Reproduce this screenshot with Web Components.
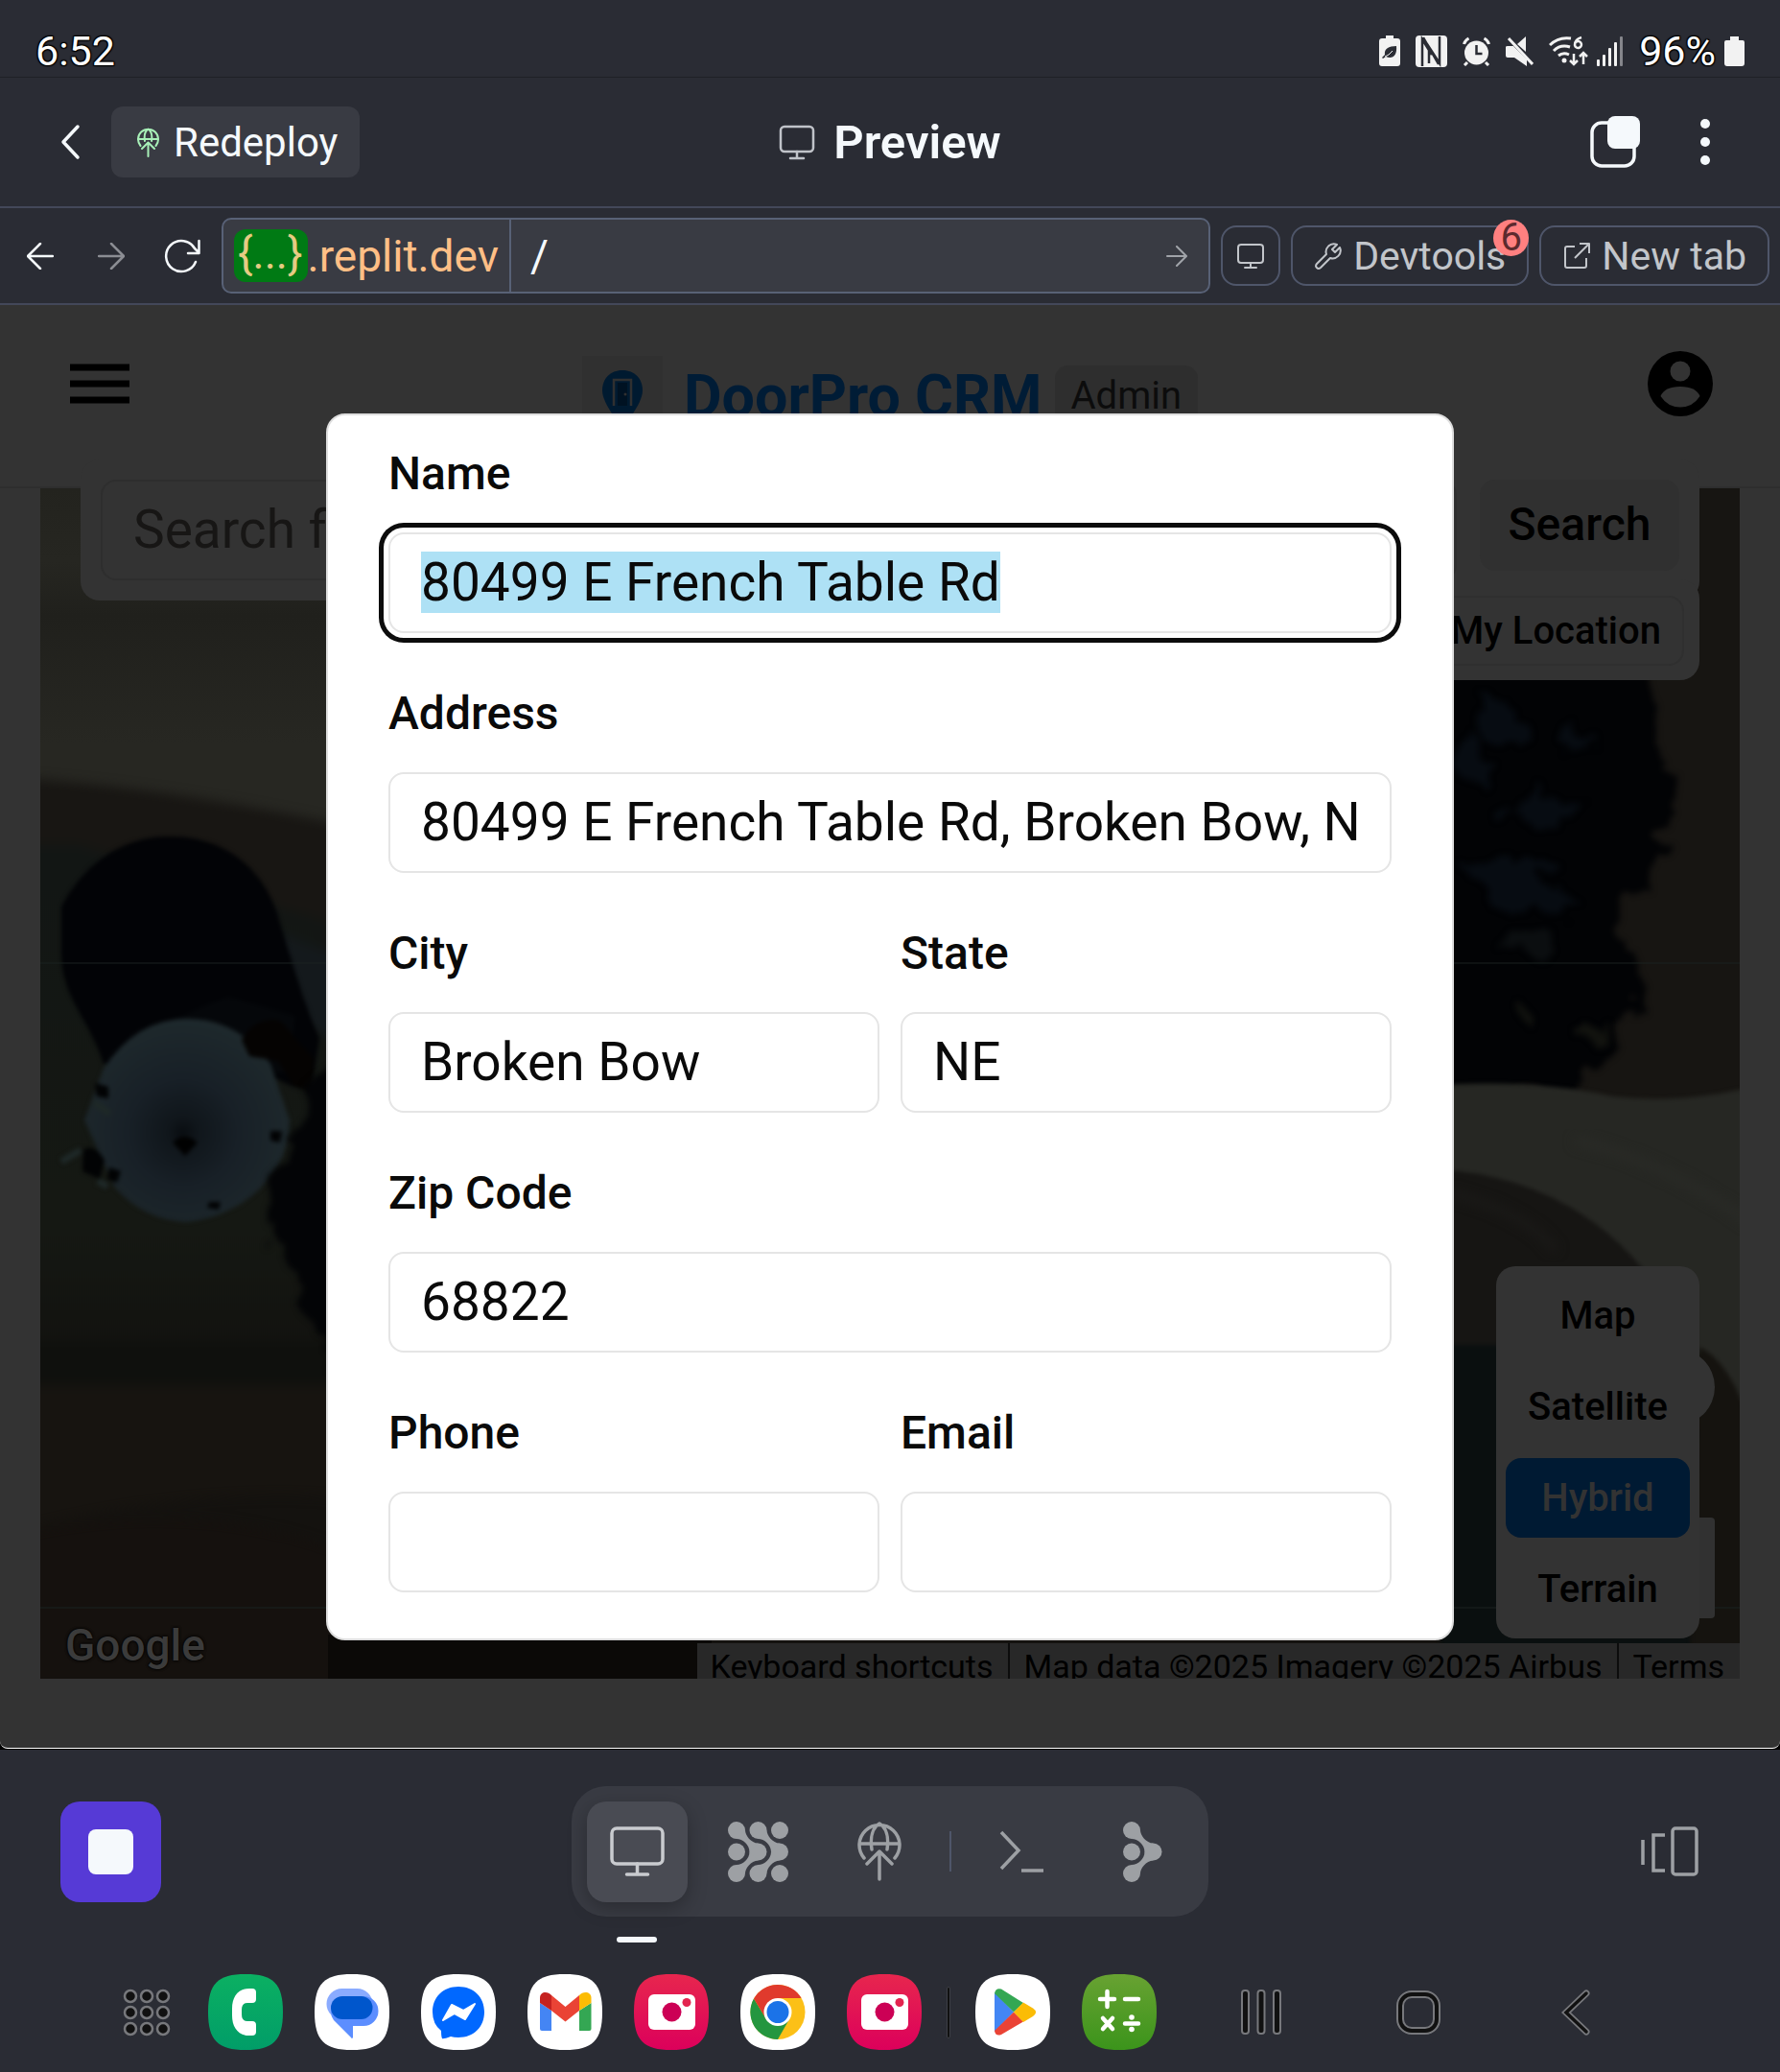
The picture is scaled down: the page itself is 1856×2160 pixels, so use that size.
<!DOCTYPE html>
<html lang="en">
<head>
<meta charset="utf-8">
<title>Preview</title>
<style>
  html, body { margin: 0; }
  body {
    min-height: 100vh; display: flex; flex-direction: column;
    background: #2a2c34; color: #f5f9fc;
    font-family: Roboto, "Liberation Sans", sans-serif;
  }
  crm-preview { flex: 1; }
</style>
</head>
<body>
<status-bar time="6:52" battery="96%"></status-bar>
<app-header><span slot="action">Redeploy</span><span slot="title">Preview</span></app-header>
<browser-bar></browser-bar>
<crm-preview></crm-preview>
<tool-dock></tool-dock>
<task-bar></task-bar>

<script>
const squircle = fill => `<path fill="${fill}" d="M39 0C68 0 78 10 78 39.500S68 79 39 79 0 69 0 39.500 10 0 39 0Z"/>`;
const link = (x, y) => `<path d="M${x + 18} ${y + 9}c0 5 6 13.500 13.500 13.500l-9 9c0-7.500-7-13.500-13.500-13.500z"/>`;
const linkUp = (x, y) => `<path d="M${x + 18} ${y + 54}c0-5 6-13.500 13.500-13.500l-9-9c0 7.500-7 13.500-13.500 13.500z"/>`;
const dot = (x, y) => `<circle cx="${x}" cy="${y}" r="9"/>`;
const camera = squircle('url(#g)') + `<defs><linearGradient id="g" x1="0" y1="0" x2="0" y2="1"><stop stop-color="#e7264e"/><stop offset="1" stop-color="#dc005b"/></linearGradient></defs><rect x="15" y="21" width="49" height="37" rx="6" fill="#fff"/><circle cx="39.500" cy="39.500" r="10" fill="#cc0055"/><circle cx="55" cy="29.500" r="4.500" fill="#e3244f"/>`;

/* name: [width, height, markup] */
const ICONS = {
  batteryLeaf: [22, 32, `<path fill="#f2f2f2" d="M7 0h8v3h4q3 0 3 3v23q0 3-3 3H3q-3 0-3-3V6q0-3 3-3h4z"/><path fill="#2a2c34" d="M18 11c-8 0-13 3-12 9l-3 3 1 1 3-2c7 3 12-1 11-11z"/><path d="M6 22q4-1 8-6" stroke="#f2f2f2" fill="none"/>`],
  nfc: [33, 33, `<rect width="33" height="33" rx="4" fill="#f2f2f2"/><path d="M7 32V4L17 20M25 1v28L14 12v17M8 2l16 28" fill="none" stroke="#2a2c34" stroke-width="2.500"/>`],
  alarm: [29, 31, `<circle cx="14.500" cy="17" r="12.500" fill="#f2f2f2"/><path d="M1.500 8q1-4 5-6M27.500 8q-1-4-5-6M5 27l-3 3M24 27l3 3" stroke="#f2f2f2" stroke-width="3" fill="none"/><path d="M14.500 9v9h6" fill="none" stroke="#2a2c34" stroke-width="2.500"/>`],
  mute: [29, 31, `<path fill="#f2f2f2" d="M0 11q0-1 2-1h6l14 14v7L9 22H2q-2 0-2-2zM21 0v16L12 8z"/><path d="M3 2l25 27" stroke="#f2f2f2" stroke-width="3"/>`],
  wifi: [41, 32, `<g fill="none" stroke="#f2f2f2" stroke-width="3"><path d="M1 10q9-9 22-7"/><path d="M5 16q7-7 17-4"/><path d="M10 21q5-4 11-1"/></g><circle cx="16" cy="26" r="2.500" fill="#f2f2f2"/><path d="M34 2q-7 2-7 8a3.500 3.500 0 1 0 1-3" fill="none" stroke="#f2f2f2" stroke-width="2.500"/><path d="M26 19v11m-4-4 4 4 4-4M36 30V18m-4 4 4-4 4 4" fill="none" stroke="#f2f2f2" stroke-width="2.500"/>`],
  signal: [28, 31, `<g fill="#f2f2f2"><rect y="24" width="3" height="7" rx="1"/><rect x="6" y="19" width="3" height="12" rx="1"/><rect x="12" y="12" width="3" height="19" rx="1"/><rect x="18" y="6" width="3" height="25" rx="1"/></g><rect x="24" width="3" height="31" rx="1" fill="#85868b"/>`],
  battery: [21, 31, `<path fill="#f2f2f2" d="M6 0h9v4h4q2 0 2 2v22q0 3-3 3H3q-3 0-3-3V6q0-2 2-2h4z"/>`],
  chevron: [22, 38, `<path d="M19 3 4 19l15 16" fill="none" stroke="#f5f9fc" stroke-width="3.500" stroke-linecap="round" stroke-linejoin="round"/>`],
  globe: [46, 62, `<g fill="none" stroke="currentColor" stroke-width="3.500" stroke-linecap="round" stroke-linejoin="round"><path d="M7 38A21 21 0 1 1 39 38M2 23h42M15 29C13 16 16 6 23 2c7 4 10 14 8 27M23 60V31M10 44l13-13 13 13"/></g>`],
  globeBold: [23, 31, `<g fill="none" stroke="currentColor" stroke-width="2" stroke-linecap="round" stroke-linejoin="round"><path d="M3.500 19A10.500 10.500 0 1 1 19.500 19M1.500 12h20M8 14C7 8 8 4 11.500 1.500 15 4 16 8 15 14M11.500 30V16M5 22l6.500-6.500L18 22"/></g>`],
  monitor: [38, 37, `<g fill="none" stroke="currentColor" stroke-width="2.500" stroke-linecap="round"><rect x="2" y="2" width="34" height="26" rx="4"/><path d="M19 28v7M12 35h14"/></g>`],
  monitorSmall: [30, 28, `<g fill="none" stroke="currentColor" stroke-width="2" stroke-linecap="round"><rect x="2" y="2" width="26" height="19" rx="3"/><path d="M15 21v5M9 26h12"/></g>`],
  monitorLarge: [57, 52, `<g fill="none" stroke="currentColor" stroke-width="3.500" stroke-linecap="round"><rect x="2" y="2" width="53" height="37" rx="5"/><path d="M28.500 39v10M17.500 50h22"/></g>`],
  windows: [52, 54, `<rect x="2" y="7" width="44" height="45" rx="10" fill="none" stroke="#f5f9fc" stroke-width="3.500"/><rect x="18" y="0" width="34" height="34" rx="8" fill="#f5f9fc"/>`],
  dots: [12, 50, `<g fill="#f5f9fc"><circle cx="6" cy="6" r="5"/><circle cx="6" cy="25" r="5"/><circle cx="6" cy="44" r="5"/></g>`],
  left: [28, 28, `<path d="M27 14H1M14 1 1 14l13 13" fill="none" stroke="currentColor" stroke-width="2.500" stroke-linecap="round" stroke-linejoin="round"/>`],
  right: [28, 28, `<path d="M1 14h26M14 1l13 13-13 13" fill="none" stroke="currentColor" stroke-width="2.500" stroke-linecap="round" stroke-linejoin="round"/>`],
  go: [22, 22, `<path d="M1 11h19M11 1l10 10-10 10" fill="none" stroke="currentColor" stroke-width="2" stroke-linecap="round"/>`],
  reload: [38, 36, `<path d="M36.500 2v13H25M33 24a16 16 0 1 1-1-14l4.500 4.500" fill="none" stroke="currentColor" stroke-width="2.500" stroke-linecap="round" stroke-linejoin="round"/>`],
  wrench: [28, 28, `<path d="M23 2C16-1 10 6 12 12L2 22c-2.500 3 1 6.500 4 4l10-10c6 2 13-4 10-11l-5 5-3-3z" fill="none" stroke="currentColor" stroke-width="2" stroke-linejoin="round"/>`],
  external: [28, 28, `<path d="M12 4H4Q2 4 2 6v18q0 2 2 2h18q2 0 2-2v-8M17 1h10v10M27 1 12 16" fill="none" stroke="currentColor" stroke-width="2" stroke-linejoin="round"/>`],
  menu: [62, 42, `<path d="M0 4h62M0 21h62M0 38h62" stroke="#000" stroke-width="7"/>`],
  account: [68, 68, `<circle cx="34" cy="34" r="34"/><circle cx="34" cy="21" r="10.500" fill="#333"/><path d="M13.500 47q4-10 20.500-10t20.500 10Q47 58.500 34 58.500T13.500 47z" fill="#333"/>`],
  pin: [84, 84, `<rect width="84" height="84" fill="#303030"/><path d="M42 15c-13 0-21 9-21 21 0 15 21 38 21 38s21-23 21-38c0-12-8-21-21-21z" fill="#001a30"/><path d="M33 52V25h18v27" fill="none" stroke="#303030" stroke-width="2.500"/><path d="M37 28h10v24H37z" fill="#001222"/><circle cx="45" cy="40" r="1.500" fill="#303030"/>`],
  stop: [47, 47, `<rect width="47" height="47" rx="8" fill="#f5f9fc"/>`],
  agent: [63, 63, `<g fill="currentColor">${[9, 31.5, 54].map(x => [9, 31.5, 54].map(y => dot(x, y)).join('')).join('')}${link(0, 0)}${linkUp(0, 0)}${link(22.5, 0)}${linkUp(22.5, 0)}</g>`],
  branch: [41, 63, `<g fill="currentColor">${dot(9, 9)}${dot(9, 31.5)}${dot(9, 54)}${dot(31.5, 31.5)}${link(0, 0)}${linkUp(0, 0)}</g>`],
  shell: [48, 44, `<path d="M2 2l18 19L2 40M23 42h23" fill="none" stroke="currentColor" stroke-width="3.500"/>`],
  panels: [60, 52, `<g fill="none" stroke="currentColor" stroke-width="3.500"><path d="M2 14v26M25 9H13v37h12"/><rect x="33" y="2" width="25" height="48" rx="3"/></g>`],
  apps: [50, 50, `<g fill="#111" stroke="#77787c" stroke-width="2.500">${[8, 25, 42].map(x => [8, 25, 42].map(y => `<circle cx="${x}" cy="${y}" r="6"/>`).join('')).join('')}</g>`],
  phone: [78, 79, `<defs><linearGradient id="g" x1="0" y1="0" x2="0" y2="1"><stop stop-color="#0bb062"/><stop offset="1" stop-color="#019d68"/></linearGradient></defs>${squircle('url(#g)')}<path fill="#fff" d="M46 15q4 0 4 4v7q0 4-4 4h-5q-6 0-6 7v5q0 7 6 7h5q4 0 4 4v7q0 4-4 4h-3c-12 0-18-9-18-21v-7c0-12 6-21 18-21z"/>`],
  messages: [78, 79, `${squircle('#fff')}<rect x="12.500" y="15" width="48" height="32" rx="16" fill="#8aabff"/><path fill="#5c8eff" d="M31 23h20a15.500 15.500 0 0 1 0 31H40v12q-1 2-2 0L20 48q-3-4-3-9 1-14 14-16z"/><rect x="17" y="23" width="43.500" height="24" rx="12" fill="#0056cc"/>`],
  messenger: [78, 79, `${squircle('#fff')}<path fill="#0068ff" d="M39 13c16 0 27 11 27 26.500S55 66 39 66q-5 0-8-1-8 3-9 2-1-2-1-8-9-7-9-19.500C12 24 23 13 39 13z"/><path fill="#fff" stroke="#fff" stroke-width="2" stroke-linejoin="round" d="M23 48l9-16 12 6 12-7-10 16-11-6z"/>`],
  gmail: [78, 79, `${squircle('#fff')}<path fill="#4485f4" d="M13 30l12 8v21H15q-2 0-2-2z"/><path fill="#34a753" d="M66.500 30 54 38v21h10.500q2 0 2-2z"/><path fill="#ea4335" d="M25 22l14.500 12L54 22v16L39.500 49.500 25 38z"/><path fill="#c52220" d="M13 30v-5c0-7 8-7.500 12-3v16z"/><path fill="#fcbc04" d="M66.500 30v-5c0-7-8.500-7.500-12.500-3v16z"/>`],
  camera: [78, 79, camera],
  chrome: [78, 79, `${squircle('#fff')}<circle cx="39" cy="39.500" r="28.500" fill="#fcc017"/><path fill="#24963f" d="M14 25.500 27 47l24 0-12 21A28.500 28.500 0 0 1 14 25.500z"/><path fill="#e03a2d" d="M14 25.500a28.500 28.500 0 0 1 49.500-.500H39L27 47z"/><circle cx="39" cy="39.500" r="14.500" fill="#fff"/><circle cx="39" cy="39.500" r="11.500" fill="#1b73e8"/>`],
  play: [78, 79, `${squircle('#fff')}<path fill="#4386f4" d="M20 19l20 20.500L20 60z"/><path fill="#34a753" d="M20 20q1-6 7-4.500L50 30 40 39.500z"/><path fill="#ea4335" d="M20 59q1 6 7 4l23-13.500-10-10z"/><path fill="#fbbc05" d="M50 29.500l10 6q6 4 0 8.500l-10 6-10-10.500z"/>`],
  calc: [78, 79, `<defs><linearGradient id="g" x1="0" y1="0" x2="0" y2="1"><stop stop-color="#68a232"/><stop offset="1" stop-color="#3b941b"/></linearGradient></defs>${squircle('url(#g)')}<g stroke="#fff" stroke-width="4.500" stroke-linecap="round"><path d="M19 26h15M26.500 18v16M45 26h14M45 51.500h14M22 46l10 11M32 46 22 57"/></g><circle cx="52" cy="45" r="2.800" fill="#fff"/><circle cx="52" cy="57.500" r="2.800" fill="#fff"/>`],
  recents: [44, 47, `<g fill="#111" stroke="#77787c" stroke-width="2"><rect x="2" y="1" width="7" height="45" rx="3"/><rect x="18.500" y="1" width="7" height="45" rx="3"/><rect x="35" y="1" width="7" height="45" rx="3"/></g>`],
  home: [46, 46, `<g fill="none"><rect x="4" y="4" width="38" height="38" rx="12" stroke="#77787c" stroke-width="8"/><rect x="4" y="4" width="38" height="38" rx="12" stroke="#111" stroke-width="4"/></g>`],
  back: [30, 48, `<g fill="none" stroke-linecap="round"><path d="M26 4 5 24l21 20" stroke="#77787c" stroke-width="7"/><path d="M26 4 5 24l21 20" stroke="#111" stroke-width="3.500"/></g>`]
};

function component(name, html, setup) {
  const template = document.createElement('template');
  template.innerHTML = html;
  customElements.define(name, class extends HTMLElement {
    constructor() {
      super();
      this.attachShadow({ mode: 'open' }).append(template.content.cloneNode(true));
    }
    connectedCallback() { if (setup) setup.call(this, this.shadowRoot); }
  });
}

component('ui-icon', `<style>:host{display:block;flex:none} svg{display:block}</style>`, function (root) {
  const [w, h, body] = ICONS[this.getAttribute('name')];
  root.innerHTML += `<svg width="${w}" height="${h}" viewBox="0 0 ${w} ${h}" aria-hidden="true">${body}</svg>`;
});

const RESET = `*{box-sizing:border-box} button,input{font:inherit;color:inherit;margin:0;padding:0;border:0;background:none}`;

component('status-bar', `
<style>${RESET}
:host{display:flex;height:81px;align-items:center;justify-content:space-between;padding:26px 37px 0;border-bottom:1px solid #1f2126;box-sizing:border-box;font-size:43px;line-height:50px;color:#fff;
 text-shadow:0 0 2px #000,1px 1px 1px #000,-1px -1px 1px #000,1px -1px 1px #000,-1px 1px 1px #000}
div{display:flex;align-items:center;gap:16px}
.tight{gap:9px}
</style>
<span id="time"></span>
<div><ui-icon name="batteryLeaf"></ui-icon><ui-icon name="nfc"></ui-icon><ui-icon name="alarm"></ui-icon><ui-icon name="mute"></ui-icon>
<div class="tight"><ui-icon name="wifi"></ui-icon><ui-icon name="signal"></ui-icon></div>
<div class="tight"><span id="battery"></span><ui-icon name="battery"></ui-icon></div></div>`,
function (root) {
  root.getElementById('time').textContent = this.getAttribute('time');
  root.getElementById('battery').textContent = this.getAttribute('battery');
});

component('app-header', `
<style>${RESET}
:host{display:grid;grid-template-columns:1fr auto 1fr;align-items:center;height:136px;box-sizing:border-box;border-bottom:2px solid #434859;padding:0 52px}
.side{display:flex;align-items:center;gap:22px}
.end{justify-content:flex-end;gap:62px;padding-right:20px}
.back{padding:0 10px}
.deploy{display:flex;align-items:center;gap:15px;height:74px;padding:0 23px 0 27px;border-radius:12px;background:#393b43;font-size:42px}
.deploy ui-icon{color:#a8f0b8}
h1{display:flex;align-items:center;gap:19px;margin:0;font-size:49px;font-weight:600}
h1 ui-icon{color:#c0c3c9}
</style>
<div class="side"><button class="back" aria-label="Back"><ui-icon name="chevron"></ui-icon></button>
<button class="deploy"><ui-icon name="globeBold"></ui-icon><slot name="action"></slot></button></div>
<h1><ui-icon name="monitor"></ui-icon><slot name="title"></slot></h1>
<div class="side end"><button aria-label="Tabs"><ui-icon name="windows"></ui-icon></button><button aria-label="More"><ui-icon name="dots"></ui-icon></button></div>`);

component('browser-bar', `
<style>${RESET}
:host{display:flex;align-items:center;gap:11px;height:101px;box-sizing:border-box;border-bottom:2px solid #434859;padding:0 11px 0 5px}
nav{display:flex;margin-right:-7px}
nav button{width:74px;height:74px;display:grid;place-items:center}
nav button:disabled{color:#8b8d93}
.url{flex:1;min-width:0;display:flex;align-items:stretch;height:79px;border:2px solid #586176;border-radius:10px;background:#393b43;font-size:46px}
.host{display:flex;align-items:center;padding:0 11px;border-right:2px solid #586176;color:#ffbf86}
.host b{font-weight:400;height:55px;line-height:50px;padding:0 5px 0 4px;border-radius:12px;background:#007a14;color:#e6cb83}
.url input{flex:1;min-width:0;padding-left:20px;outline:0}
.url button{width:66px;display:grid;place-items:center;color:#a0a3a9}
.btn{position:relative;display:flex;align-items:center;gap:12px;height:63px;border:2px solid #4f566a;border-radius:16px;padding:0 22px 0 23px;font-size:41px;color:#c2c5ca;white-space:nowrap}
.btn.icon{padding:0 14px}
.badge{position:absolute;right:-2px;top:-8px;width:37px;height:38px;border-radius:50%;background:#ff8080;color:#5c2a2e;font-size:40px;line-height:38px;text-align:center}
</style>
<nav><button aria-label="Back"><ui-icon name="left"></ui-icon></button><button aria-label="Forward" disabled><ui-icon name="right"></ui-icon></button><button aria-label="Reload"><ui-icon name="reload"></ui-icon></button></nav>
<div class="url"><span class="host"><b>{...}</b><span>.replit.dev</span></span><input aria-label="Path" value="/"><button aria-label="Go"><ui-icon name="go"></ui-icon></button></div>
<button class="btn icon" aria-label="Device size"><ui-icon name="monitorSmall"></ui-icon></button>
<button class="btn"><ui-icon name="wrench"></ui-icon>Devtools<span class="badge">6</span></button>
<button class="btn"><ui-icon name="external"></ui-icon>New tab</button>`);

component('satellite-photo', `
<style>:host{display:block;overflow:hidden} svg{display:block;width:100%;height:100%}</style>
<svg viewBox="0 0 1772 1241" preserveAspectRatio="none" color-interpolation-filters="sRGB" aria-hidden="true">
<defs>
<filter id="soft"><feGaussianBlur stdDeviation="6"/></filter>
<filter id="edge"><feGaussianBlur stdDeviation="2"/></filter>
<filter id="rough" x="-10%" y="-10%" width="120%" height="120%"><feTurbulence type="fractalNoise" baseFrequency=".03" numOctaves="3" seed="4"/><feDisplacementMap in="SourceGraphic" scale="50" xChannelSelector="R" yChannelSelector="G"/><feGaussianBlur stdDeviation="3"/></filter>
<linearGradient id="left" x1="0" y1="0" x2="0" y2="1"><stop stop-color="#23231e"/><stop offset=".2" stop-color="#262621"/><stop offset=".35" stop-color="#20201c"/><stop offset=".7" stop-color="#272722"/></linearGradient>
<radialGradient id="cone" cx=".48" cy=".56" r=".6"><stop stop-color="#090d11"/><stop offset=".12" stop-color="#10161b"/><stop offset=".45" stop-color="#182027"/><stop offset="1" stop-color="#1f2a2d"/></radialGradient>
<linearGradient id="ground" x1="0" y1="0" x2="0" y2="1"><stop stop-color="#121614"/><stop offset=".75" stop-color="#151813"/><stop offset="1" stop-color="#12120f"/></linearGradient>
</defs>
<rect width="1772" height="1241" fill="#14120f"/>
<rect width="760" height="380" fill="url(#left)"/>
<g filter="url(#soft)">
<path d="M-20 302q150 10 330 48v170H-20z" fill="#181613"/>
<path d="M-20 372l60 0 260 80v450H-20z" fill="url(#ground)"/>
<path d="M-20 890h340v45H-20z" fill="#0f100d"/>
<path d="M-20 935h360v120q-160-20-360 30z" fill="#171410"/>
<path d="M-20 1090q180-40 340 20v140H-20z" fill="#15110e"/>
<path d="M240 460q50 20 80 30v90l-50-20z" fill="#14191c"/>
</g>
<g filter="url(#edge)">
<path d="M22 436C50 385 90 363 135 363c55 0 95 30 112 80 15 50 30 100 44 130l-8 55q-50-5-90-70L66 600C50 550 20 530 22 480z" fill="#020306"/>
<path d="M66 600q60-45 130-70l70 20-6 60z" fill="#05070a"/>
<path d="M46 659L66 605Q100 553 153 553T240 600l20 59q0 40-30 70t-77 36q-45-2-75-36z" fill="url(#cone)"/>
<path d="M210 575q15-25 40-20l35 40-2 35-20-8-15-25-30-5z" fill="#050302"/>
<path d="M138 682q12-12 26 0l-13 14z" fill="#010101"/>
<path d="M45 690q10-8 22 10l-5 20-18-8zM57 620l14 4v12l-12-2zM72 708l12 4-4 12-10-4zM176 744h12l-2 8-12-2zM240 670h12l-2 12-10-2z" fill="#020304"/>
<path d="M55 640l18 12M22 702l20-12M60 722l10 6" stroke="#1e2827" stroke-width="7"/>
</g>
<path filter="url(#rough)" d="M285 620l60-40v350l-60-40-10-60-40-40 15-70z" fill="#030406"/>
<rect x="1440" width="332" height="700" fill="#171512"/>
<path filter="url(#rough)" d="M1380 150h310l-5 120 25 40-25 80-40 60 30 70-30 60-40 50h-220z" fill="#020305"/>
<g filter="url(#rough)" fill="#070c12"><path d="M1500 220l60 20-10 26-50-10zM1550 310l60 20-20 30-60-20zM1480 380l70 10 60 40-90 20zM1490 250l30 40-10 30-30-20zM1600 240l20 30-30 10z"/><path d="M1530 460l60 5-20 25-50-5z" fill="#0b0e10"/><path d="M1600 560l40 5-10 15-30-5zM1540 540l20 5-10 15z" fill="#12130f"/></g>
<g filter="url(#edge)">
<path d="M1460 622q100-6 180 12 70 8 145-10v400q-25-90-60-125l-40 30q-90-200-225-218z" fill="#262723"/>
<path d="M1460 710q140 10 220 115v130h-220z" fill="#161513"/>
<path d="M1460 893h260v360h-260z" fill="#0a0f0f"/>
<path d="M1730 895q40 20 60 110v250h-70z" fill="#15130f"/>
</g>
<g filter="url(#soft)" fill="none"><path d="M1470 735q80 20 110 60" stroke="#1b1a18" stroke-width="8"/>
<path d="M1600 680q90 20 190 90" stroke="#2a2b27" stroke-width="8"/></g>
<rect x="300" y="1195" width="400" height="46" fill="#0b0907"/>
<path d="M0 495h1772M0 1167h1772" stroke="#1b2220" stroke-width="1"/>
</svg>`);

component('map-types', `
<style>${RESET}
:host{display:flex;flex-direction:column;gap:12px;box-sizing:border-box;width:212px;padding:10px;border-radius:20px;background:#333;color:#000;font-size:40px;font-weight:500}
button{height:83px;width:100%;border-radius:16px}
.on{background:#001a33;color:#333}
</style>
<button>Map</button><button>Satellite</button><button class="on">Hybrid</button><button>Terrain</button>`);

component('crm-map', `
<style>${RESET}
:host{display:block;position:relative;color:#000}
satellite-photo{position:absolute;inset:0}
.search,.locate,map-types,.credits,.google,.round,.square{position:absolute}
.search{left:42px;right:42px;top:-30px;padding:21px;border-radius:20px;background:#333;display:flex;align-items:flex-start;gap:24px}
.search input{flex:1;min-width:0;height:105px;border:2px solid #2e2e2e;border-radius:16px;padding:0 32px 2px;font-size:55px}
.search input::placeholder{color:#171615;opacity:1}
.search button{width:208px;height:95px;padding-bottom:2px;border-radius:16px;background:#303030;font-size:48px;font-weight:500}
.locate{right:42px;top:95px;padding:17px 16px 15px;border-radius:20px;background:#333}
.locate button{height:73px;padding:0 22px;border:2px solid #2f2f2f;border-radius:16px;font-size:40px;font-weight:500}
map-types{right:42px;bottom:42px}
.round{right:26px;bottom:264px;width:80px;height:80px;border-radius:50%;background:#333}
.square{right:26px;bottom:63px;width:80px;height:105px;border-radius:4px;background:#313131}
.google{left:26px;bottom:8px;font-size:46px;line-height:54px;font-weight:500;color:#3b3b3b;text-shadow:0 0 3px #000,0 0 3px #000}
.credits{right:0;bottom:0;height:37px;overflow:hidden;display:flex;background:#282828;font-size:34px;line-height:48px;white-space:nowrap;color:#000}
.credits a{color:inherit;text-decoration:none;padding:0 16px 0 14px;border-left:2px solid #0c0c0c}
.credits a:first-child{border:0}
</style>
<satellite-photo></satellite-photo>
<div class="search"><input aria-label="Search" placeholder="Search f"><button>Search</button></div>
<div class="locate"><button>My Location</button></div>
<span class="round"></span><span class="square"></span>
<map-types></map-types>
<span class="google">Google</span>
<div class="credits"><a href="#keys">Keyboard shortcuts</a><a href="#data">Map data ©2025 Imagery ©2025 Airbus</a><a href="#terms">Terms</a></div>`);

component('form-field', `
<style>${RESET}
:host{display:flex;flex-direction:column;gap:37px;min-width:0}
label{font-size:48px;line-height:48px;font-weight:500}
input{width:100%;height:105px;border:2px solid #e5e5e5;border-radius:16px;padding:0 32px 2px;font-size:55px;background:#fff;outline:0}
input:focus{box-shadow:0 0 0 5px #fff,0 0 0 10px #0c0c0c}
input::selection{background:#aee1f5;color:#0a0a0a}
</style>
<label for="field"></label><input id="field">`,
function (root) {
  root.querySelector('label').textContent = this.getAttribute('label');
  const input = root.querySelector('input');
  input.value = this.getAttribute('value') || '';
  if (this.hasAttribute('selected')) { input.focus(); input.select(); }
});

component('property-dialog', `
<style>
:host{display:block;box-sizing:border-box;width:calc(100% - 48px);max-width:1176px;border:2px solid #dedede;border-radius:20px;background:#fff;color:#0a0a0a;padding:37px 63px 48px}
form{display:grid;grid-template-columns:1fr 1fr;column-gap:22px;row-gap:60px}
.wide{grid-column:1/-1}
</style>
<form>
<form-field class="wide" label="Name" value="80499 E French Table Rd" selected></form-field>
<form-field class="wide" label="Address" value="80499 E French Table Rd, Broken Bow, NE"></form-field>
<form-field label="City" value="Broken Bow"></form-field><form-field label="State" value="NE"></form-field>
<form-field class="wide" label="Zip Code" value="68822"></form-field>
<form-field label="Phone"></form-field><form-field label="Email"></form-field>
</form>`);

component('crm-preview', `
<style>${RESET}
:host{display:grid;background:#000;border-bottom:1px solid #000}
.page,property-dialog{grid-area:1/1}
property-dialog{place-self:center;z-index:1}
.page{display:flex;flex-direction:column;background:#333;border-bottom:1px solid #fff;border-radius:0 0 8px 8px;color:#000}
header{display:grid;grid-template-columns:1fr auto 1fr;align-items:center;height:191px;padding:0 70px;border-bottom:2px solid #2e2e2e}
header>button{align-self:start;justify-self:start;height:164px;padding-left:3px}
header>button:last-child{justify-self:end}
.brand{display:flex;align-items:center;gap:22px}
h2{display:flex;align-items:center;gap:13px;margin:0;font-size:61px;line-height:70px;font-weight:700;color:#001c36}
.tag{height:64px;padding:0 17px;border-radius:14px;background:#2e2e2e;color:#0c0c0c;font-size:40px;line-height:64px;font-weight:400}
crm-map{flex:1;margin:0 42px 72px}
</style>
<div class="page">
<header><button aria-label="Menu"><ui-icon name="menu"></ui-icon></button>
<div class="brand"><ui-icon name="pin"></ui-icon><h2>DoorPro CRM<span class="tag">Admin</span></h2></div>
<button aria-label="Account"><ui-icon name="account"></ui-icon></button></header>
<crm-map></crm-map>
</div>
<property-dialog></property-dialog>`);

component('tool-dock', `
<style>${RESET}
:host{display:grid;grid-template-columns:1fr auto 1fr;align-items:center;padding:38px 63px 0}
button{display:grid;place-items:center;width:105px;height:105px;border-radius:20px;color:#9da0a4}
.stop{background:#563ad6}
.dock{display:flex;align-items:center;gap:21px;height:136px;padding:0 16px;border-radius:36px;background:#393b43;position:relative}
.on{background:#494b53;color:#c9cbcf;box-shadow:0 6px 20px #0004}
hr{width:2px;height:42px;margin:0;border:0;background:#4f566a}
.end{justify-self:end}
.pill{position:absolute;left:47px;bottom:-27px;width:42px;height:6px;border-radius:3px;background:#f5f9fc}
</style>
<button class="stop" aria-label="Stop"><ui-icon name="stop"></ui-icon></button>
<div class="dock"><button class="on" aria-label="Preview"><ui-icon name="monitorLarge"></ui-icon></button><button aria-label="Agent"><ui-icon name="agent"></ui-icon></button><button aria-label="Deploy"><ui-icon name="globe"></ui-icon></button><hr><button aria-label="Shell"><ui-icon name="shell"></ui-icon></button><button aria-label="Workflows"><ui-icon name="branch"></ui-icon></button><span class="pill"></span></div>
<button class="end" aria-label="Panels"><ui-icon name="panels"></ui-icon></button>`);

component('task-bar', `
<style>${RESET}
:host{display:flex;align-items:center;justify-content:space-between;height:162px;padding:37px 198px 0 128px;box-sizing:border-box}
div{display:flex;align-items:center;gap:33px}
.start{gap:39px}
.nav{gap:119px}
.nav button:last-child{padding-left:7px}
hr{width:4px;height:54px;margin:0 -7px;border:1px solid #3c3e45;border-radius:2px;background:#111}
</style>
<div class="start"><button aria-label="Apps"><ui-icon name="apps"></ui-icon></button>
<div class="icons"></div></div>
<div class="nav"><button aria-label="Recents"><ui-icon name="recents"></ui-icon></button><button aria-label="Home"><ui-icon name="home"></ui-icon></button><button aria-label="Back"><ui-icon name="back"></ui-icon></button></div>`,
function (root) {
  root.querySelector('.icons').innerHTML = ['phone', 'messages', 'messenger', 'gmail', 'camera', 'chrome', 'camera', '', 'play', 'calc']
    .map(n => n ? `<button aria-label="${n}"><ui-icon name="${n}"></ui-icon></button>` : '<hr>').join('');
});
</script>
</body>
</html>
